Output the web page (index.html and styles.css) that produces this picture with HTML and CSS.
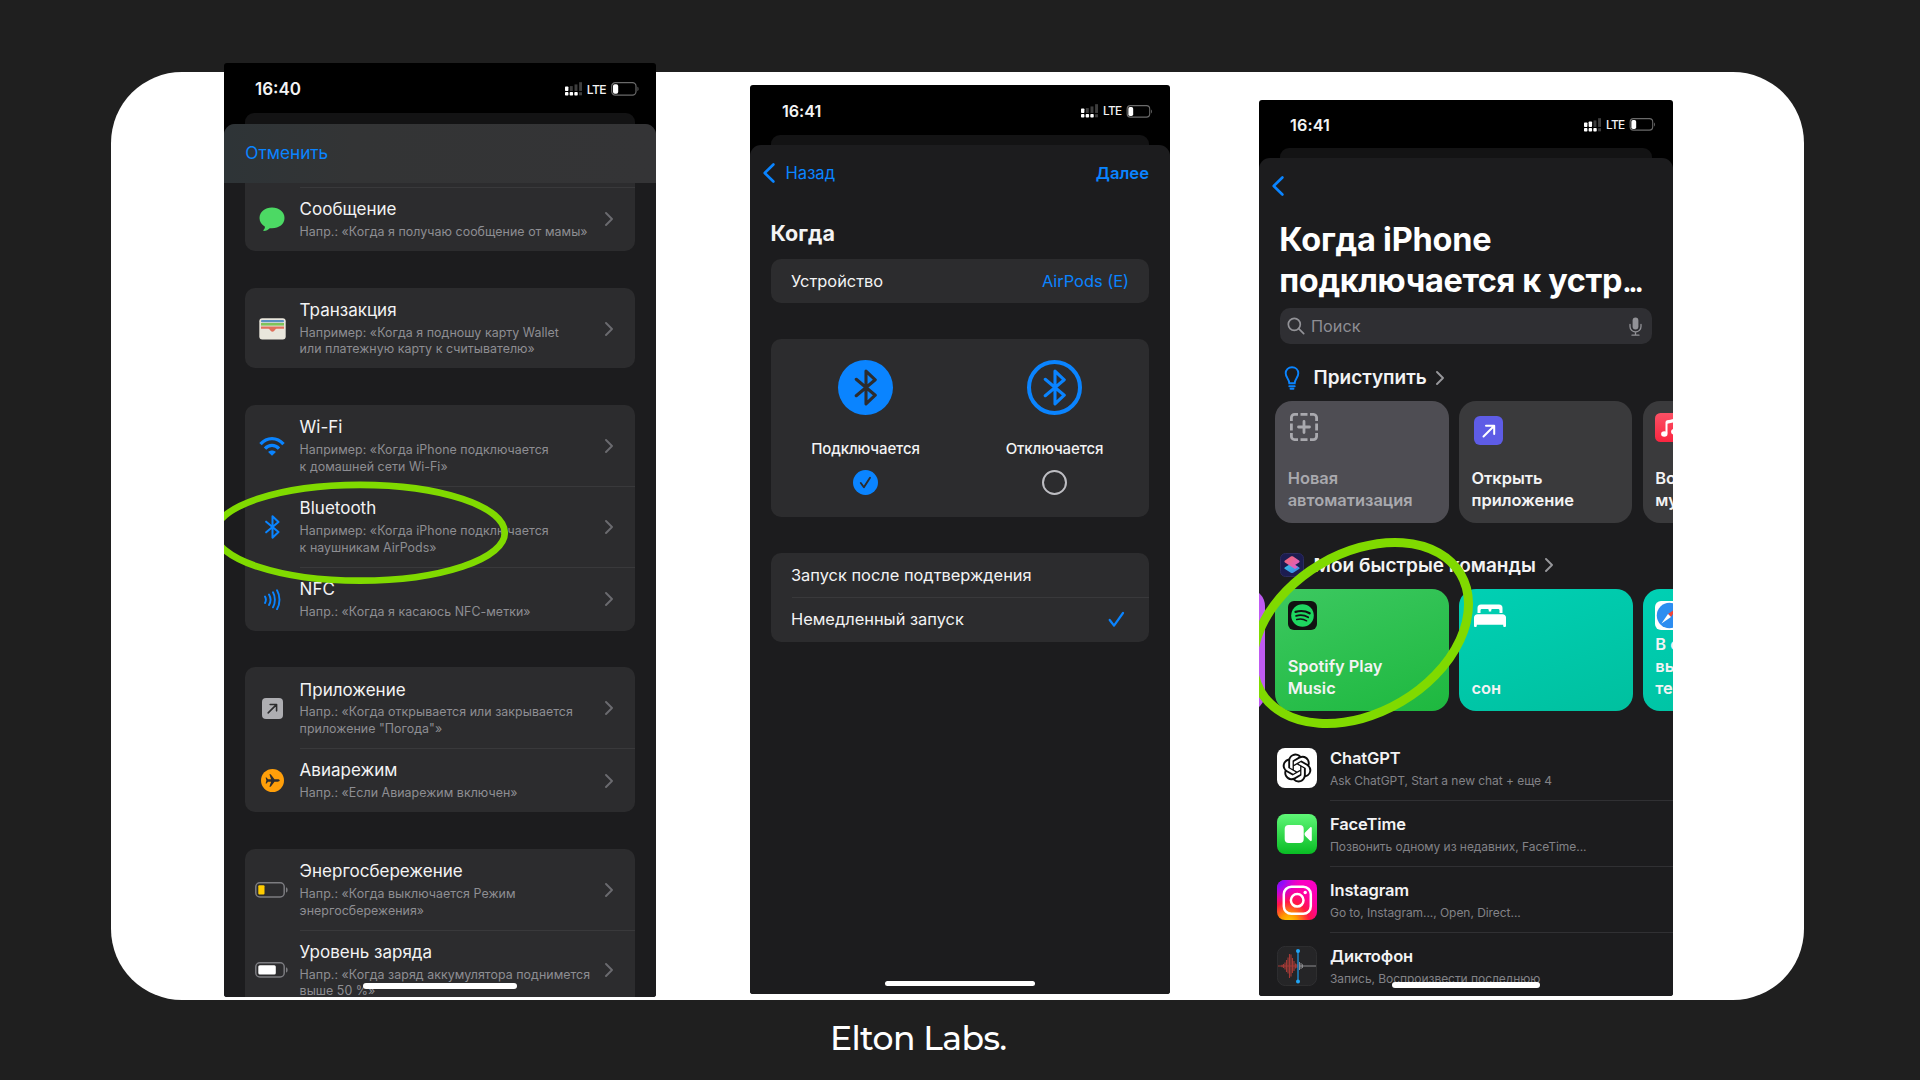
FILE: index.html
```html
<!DOCTYPE html>
<html lang="ru">
<head>
<meta charset="utf-8">
<title>Elton Labs.</title>
<link rel="stylesheet" href="styles.css">
</head>
<body>
<svg class="defs" width="0" height="0" aria-hidden="true">
  <defs>
    <symbol id="chev" viewBox="0 0 8 14"><path d="M1 1l6 6-6 6" fill="none" stroke="currentColor" stroke-width="1.9" stroke-linecap="round" stroke-linejoin="round"/></symbol>
    <symbol id="back" viewBox="0 0 12 20"><path d="M10.4 1.5L1.7 10l8.7 8.5" fill="none" stroke="currentColor" stroke-width="2.6" stroke-linecap="round" stroke-linejoin="round"/></symbol>
    <symbol id="bt" viewBox="0 0 22 36"><path d="M1.5 10L20 25.5 11 34V2l9 8.500L1.500 26" fill="none" stroke="currentColor" stroke-width="3" stroke-linecap="round" stroke-linejoin="round"/></symbol>
    <symbol id="battery" viewBox="0 0 28 14"><rect x=".7" y=".7" width="24.300" height="12.400" rx="3.600" fill="none" stroke="#6a6a6a" stroke-width="1.200"/><path d="M26.500 4.800c1.300.5 1.300 3.900 0 4.400z" fill="#6a6a6a"/><rect x="2" y="2.200" width="5.200" height="9.600" rx="1.800" fill="#fff"/></symbol>
    <symbol id="arrow" viewBox="0 0 14 14"><path d="M1.500 12.500L12 2M4 1.800h8.200V10" fill="none" stroke="currentColor" stroke-width="2" stroke-linecap="round" stroke-linejoin="round"/></symbol>
  </defs>
</svg>

<main class="panel">

  <section class="phone phone-1">
    <div class="status">
      <span class="time">16:40</span>
      <svg class="signal" viewBox="0 0 18 14"><g fill="#3d3d3d"><rect x="5" y="4" width="3" height="5"/><rect x="9.800" y="2.300" width="3" height="6.700"/><rect x="14.500" y="0" width="3" height="9"/><rect x="14.500" y="10.300" width="3" height="3.200"/></g><g fill="#fff"><rect y="4.300" width="3.500" height="4.800" rx=".8"/><rect y="10.200" width="3.500" height="3.500" rx=".8"/><rect x="4.800" y="10.200" width="3.500" height="3.500" rx=".8"/><rect x="9.600" y="10.200" width="3.500" height="3.500" rx=".8"/></g></svg>
      <span class="lte">LTE</span>
      <svg class="bat"><use href="#battery"/></svg>
    </div>
    <div class="under"></div>
    <div class="sheet">
      <header class="cancel-bar">Отменить</header>
      <div class="group group-cut">
        <div class="row">
          <span class="ico"><svg width="26" height="25" viewBox="0 0 26 25"><path d="M13 .5C20 .5 25.500 5 25.500 11S20 21.300 13 21.300c-.8 0-1.500 0-2.200-.1-1.600 1.600-3.700 2.700-6 2.700-.5 0-.6-.5-.3-.9 1-1 1.500-2.100 1.500-3.300C2.700 17.800.5 14.700.5 11 .5 5 6 .5 13 .5z" fill="#4cd964"/></svg></span>
          <div class="txt"><h3>Сообщение</h3><p>Напр.: «Когда я получаю сообщение от мамы»</p></div>
          <svg class="chev"><use href="#chev"/></svg>
        </div>
      </div>
      <div class="group">
        <div class="row">
          <span class="ico"><svg width="27" height="22" viewBox="0 0 27 22"><rect x=".3" y=".3" width="26.400" height="21.200" rx="3" fill="#e9e6dc"/><rect x="2" y="2" width="23" height="2.200" rx="1" fill="#5a8fc0"/><rect x="2" y="5" width="23" height="2.600" fill="#7fc35a"/><path d="M2 8.500h23v2.300h-7.500c-1.500 0-1.800 3-4 3s-2.500-3-4-3H2z" fill="#e0705c"/></svg></span>
          <div class="txt"><h3>Транзакция</h3><p>Например: «Когда я подношу карту Wallet<br>или платежную карту к считывателю»</p></div>
          <svg class="chev"><use href="#chev"/></svg>
        </div>
      </div>
      <div class="group">
        <div class="row">
          <span class="ico"><svg width="26" height="19" viewBox="0 0 26 19" fill="none" stroke="#0a84ff"><path d="M1.500 7.200C8-.2 18-.2 24.500 7.200" stroke-width="3.300"/><path d="M6 11.600c4-4.200 10-4.200 14 0" stroke-width="3.300"/><path d="M13 18.800l-3.900-3.900c2-2 5.800-2 7.800 0z" fill="#0a84ff" stroke="none"/></svg></span>
          <div class="txt"><h3>Wi-Fi</h3><p>Например: «Когда iPhone подключается<br>к домашней сети Wi-Fi»</p></div>
          <svg class="chev"><use href="#chev"/></svg>
        </div>
        <div class="row">
          <span class="ico"><svg class="blue" width="15" height="24"><use href="#bt"/></svg></span>
          <div class="txt"><h3>Bluetooth</h3><p>Например: «Когда iPhone подключается<br>к наушникам AirPods»</p></div>
          <svg class="chev"><use href="#chev"/></svg>
        </div>
        <div class="row">
          <span class="ico"><svg width="17" height="21" viewBox="0 0 17 21" fill="none" stroke="#0a84ff" stroke-width="1.900" stroke-linecap="round"><path d="M1 7.500c1.100 2 1.100 4.500 0 6.500M5 5.500c1.800 3 1.800 7.500 0 10.500M9 3.300c2.500 4.300 2.500 10.600 0 15M13 1.200c3.300 5.500 3.300 13.500 0 19"/></svg></span>
          <div class="txt"><h3>NFC</h3><p>Напр.: «Когда я касаюсь NFC-метки»</p></div>
          <svg class="chev"><use href="#chev"/></svg>
        </div>
      </div>
      <div class="group">
        <div class="row">
          <span class="ico"><span class="app-sq"><svg width="11" height="11"><use href="#arrow"/></svg></span></span>
          <div class="txt"><h3>Приложение</h3><p>Напр.: «Когда открывается или закрывается<br>приложение "Погода"»</p></div>
          <svg class="chev"><use href="#chev"/></svg>
        </div>
        <div class="row">
          <span class="ico"><svg width="23" height="23" viewBox="0 0 23 23"><circle cx="11.500" cy="11.500" r="11.500" fill="#ff9f0a"/><path d="M18.700 11.500c0-.7-1-1.200-2-1.200h-3.200L9.700 5.300H8.400l1.700 5H7L5.600 8.600h-1l.8 2.900-.8 2.900h1L7 12.700h3.100l-1.700 5h1.300l3.800-5h3.200c1 0 2-.5 2-1.200z" fill="#2c2c2e"/></svg></span>
          <div class="txt"><h3>Авиарежим</h3><p>Напр.: «Если Авиарежим включен»</p></div>
          <svg class="chev"><use href="#chev"/></svg>
        </div>
      </div>
      <div class="group">
        <div class="row">
          <span class="ico"><svg width="34" height="16" viewBox="0 0 34 16"><rect x=".8" y=".8" width="28.400" height="14.200" rx="4" fill="none" stroke="#7c7c80" stroke-width="1.500"/><path d="M31 5.200c2.200.6 2.200 4.800 0 5.400z" fill="#7c7c80"/><rect x="3.300" y="3.300" width="6.200" height="9.200" rx="1" fill="#ffcc00"/></svg></span>
          <div class="txt"><h3>Энергосбережение</h3><p>Напр.: «Когда выключается Режим<br>энергосбережения»</p></div>
          <svg class="chev"><use href="#chev"/></svg>
        </div>
        <div class="row">
          <span class="ico"><svg width="34" height="16" viewBox="0 0 34 16"><rect x=".8" y=".8" width="28.400" height="14.200" rx="4" fill="none" stroke="#7c7c80" stroke-width="1.500"/><path d="M31 5.200c2.200.6 2.200 4.800 0 5.400z" fill="#7c7c80"/><rect x="3.300" y="3.300" width="17.500" height="9.200" rx="1.500" fill="#fff"/></svg></span>
          <div class="txt"><h3>Уровень заряда</h3><p>Напр.: «Когда заряд аккумулятора поднимется<br>выше 50 %»</p></div>
          <svg class="chev"><use href="#chev"/></svg>
        </div>
      </div>
    </div>
    <div class="home"></div>
    <svg class="mark" viewBox="0 0 432 934"><ellipse cx="136" cy="469.800" rx="144.800" ry="47.900" fill="none" stroke="#80da00" stroke-width="6.700"/></svg>
  </section>

  <section class="phone phone-2">
    <div class="status">
      <span class="time">16:41</span>
      <svg class="signal" viewBox="0 0 18 14"><g fill="#3d3d3d"><rect x="5" y="4" width="3" height="5"/><rect x="9.800" y="2.300" width="3" height="6.700"/><rect x="14.500" y="0" width="3" height="9"/><rect x="14.500" y="10.300" width="3" height="3.200"/></g><g fill="#fff"><rect y="4.300" width="3.500" height="4.800" rx=".8"/><rect y="10.200" width="3.500" height="3.500" rx=".8"/><rect x="4.800" y="10.200" width="3.500" height="3.500" rx=".8"/><rect x="9.600" y="10.200" width="3.500" height="3.500" rx=".8"/></g></svg>
      <span class="lte">LTE</span>
      <svg class="bat"><use href="#battery"/></svg>
    </div>
    <div class="under"></div>
    <div class="sheet">
      <header class="nav"><svg class="back"><use href="#back"/></svg><span>Назад</span><b>Далее</b></header>
      <h2>Когда</h2>
      <div class="card device"><span>Устройство</span><span class="blue">AirPods (E)</span></div>
      <div class="card choice">
        <div class="opt">
          <span class="disc disc-on"><svg width="24" height="37"><use href="#bt"/></svg></span>
          <span class="opt-name">Подключается</span>
          <span class="radio radio-on"><svg width="13" height="13" viewBox="0 0 13 13"><path d="M1.800 7l3.100 4.200L11 1.800" fill="none" stroke="#2c2c2e" stroke-width="1.900" stroke-linecap="round" stroke-linejoin="round"/></svg></span>
        </div>
        <div class="opt">
          <span class="disc disc-off"><svg width="24" height="37"><use href="#bt"/></svg></span>
          <span class="opt-name">Отключается</span>
          <span class="radio radio-off"></span>
        </div>
      </div>
      <div class="card runs">
        <div class="run"><span>Запуск после подтверждения</span></div>
        <div class="run"><span>Немедленный запуск</span><svg class="blue" width="17" height="17" viewBox="0 0 17 17"><path d="M1.700 9l4.300 5.700L15 2" fill="none" stroke="currentColor" stroke-width="2.200" stroke-linecap="round" stroke-linejoin="round"/></svg></div>
      </div>
    </div>
    <div class="home"></div>
  </section>

  <section class="phone phone-3">
    <div class="status">
      <span class="time">16:41</span>
      <svg class="signal" viewBox="0 0 18 14"><g fill="#3d3d3d"><rect x="9.800" y="2.300" width="3" height="6.700"/><rect x="14.500" y="0" width="3" height="9"/><rect x="14.500" y="10.300" width="3" height="3.200"/></g><g fill="#fff"><rect y="4.300" width="3.500" height="4.800" rx=".8"/><rect x="4.800" y="3.300" width="3.500" height="5.800" rx=".8"/><rect y="10.200" width="3.500" height="3.500" rx=".8"/><rect x="4.800" y="10.200" width="3.500" height="3.500" rx=".8"/><rect x="9.600" y="10.200" width="3.500" height="3.500" rx=".8"/></g></svg>
      <span class="lte">LTE</span>
      <svg class="bat"><use href="#battery"/></svg>
    </div>
    <div class="under"></div>
    <div class="sheet">
      <header class="nav"><svg class="back"><use href="#back"/></svg></header>
      <h1>Когда iPhone<br><span class="second">подключается к устр</span><span class="dots">...</span></h1>
      <div class="search">
        <svg width="18" height="18" viewBox="0 0 18 18" fill="none" stroke="#929297" stroke-width="1.700" stroke-linecap="round"><circle cx="7.300" cy="7.300" r="6"/><path d="M11.700 11.700l5 5"/></svg>
        <span>Поиск</span>
        <svg width="13" height="19" viewBox="0 0 13 19"><rect x="3.600" y=".5" width="5.800" height="12" rx="2.900" fill="#929297"/><path d="M1 7.500V9.500a5.500 5.500 0 0 0 11 0V7.500M6.500 15v2.800M3 18.200h7" fill="none" stroke="#929297" stroke-width="1.300" stroke-linecap="round"/></svg>
      </div>

      <div class="head">
        <svg width="24" height="24" viewBox="0 0 24 24" fill="none" stroke="#0a84ff" stroke-width="1.900" stroke-linecap="round"><path d="M9.300 17.300c0-4-3.600-5.500-3.600-10C5.700 3.600 8.500 1.200 12 1.200s6.300 2.400 6.300 6.100c0 4.500-3.600 6-3.600 10zM9.300 20.200h5.400M10.500 22.800h3"/></svg>
        <span>Приступить</span>
        <svg class="chev"><use href="#chev"/></svg>
      </div>
      <div class="tiles">
        <div class="tile tile-new">
          <svg width="28" height="28" viewBox="0 0 28 28" fill="none" stroke="#a9a9ae" stroke-width="2.800"><path d="M1.400 8V4.500a3.200 3.200 0 0 1 3.200-3.100H8M20 1.400h3.500a3.200 3.200 0 0 1 3.100 3.200V8M26.600 20v3.500a3.200 3.200 0 0 1-3.200 3.100H20M8 26.600H4.500a3.200 3.200 0 0 1-3.100-3.200V20M10.500 1.400h7M10.500 26.600h7M1.400 10.500v7M26.600 10.500v7"/><path d="M14 8.500v11M8.500 14h11" stroke-linecap="round"/></svg>
          <p>Новая<br>автоматизация</p>
        </div>
        <div class="tile tile-open">
          <span class="open-ico"><svg width="14" height="14"><use href="#arrow"/></svg></span>
          <p>Открыть<br>приложение</p>
        </div>
        <div class="tile tile-music">
          <svg width="29" height="29" viewBox="0 0 29 29"><defs><linearGradient id="mus" x2="0" y2="1"><stop stop-color="#fb5165"/><stop offset="1" stop-color="#fa2540"/></linearGradient></defs><rect width="29" height="29" rx="5.500" fill="url(#mus)"/><path d="M11.500 8.500l10-2v11.500M11.500 8.500v12" fill="none" stroke="#fff" stroke-width="2"/><path d="M11 8l11-2.300v3L11 11z" fill="#fff"/><ellipse cx="9.300" cy="21" rx="3.200" ry="2.800" fill="#fff"/><ellipse cx="19.200" cy="18.800" rx="3.200" ry="2.800" fill="#fff"/></svg>
          <p>Воспр.<br>музыку</p>
        </div>
      </div>

      <div class="head head-2">
        <svg width="24" height="24" viewBox="0 0 24 24"><defs><linearGradient id="sc1" x2="1" y2="1"><stop stop-color="#f46a6a"/><stop offset="1" stop-color="#d65bd8"/></linearGradient><linearGradient id="sc2" x2="1" y2="1"><stop stop-color="#35c9e8"/><stop offset="1" stop-color="#3f7fe0"/></linearGradient></defs><rect x=".5" y=".5" width="23" height="23" rx="5" fill="#1c1c50" stroke="#2b2b5c"/><path d="M12 10l7 4.200c.8.500.8 1.300 0 1.800l-5.800 3.700c-.8.500-1.600.5-2.400 0L5 16c-.8-.5-.8-1.300 0-1.800z" fill="url(#sc2)"/><path d="M10.800 3.600c.8-.5 1.600-.5 2.400 0L19 7.600c.8.500.8 1.300 0 1.800L15 12l3 2-3 2L5 9.600c-.8-.5-.8-1.500 0-2z" fill="url(#sc1)"/></svg>
        <span>Мои быстрые команды</span>
        <svg class="chev"><use href="#chev"/></svg>
      </div>
      <div class="tiles tiles-2">
        <div class="tile tile-prev"></div>
        <div class="tile tile-spot">
          <svg width="29" height="29" viewBox="0 0 29 29"><rect width="29" height="29" rx="6" fill="#111"/><circle cx="14.500" cy="14.500" r="11.300" fill="#1ed760"/><g fill="none" stroke="#111" stroke-linecap="round"><path d="M7.500 10.900c4.600-1.400 10-1 14.200 1.400" stroke-width="2.200"/><path d="M8.100 14.900c4-1.200 8.500-.7 12.100 1.300" stroke-width="1.800"/><path d="M8.700 18.600c3.400-.9 6.900-.5 9.900 1.200" stroke-width="1.500"/></g></svg>
          <p>Spotify Play<br>Music</p>
        </div>
        <div class="tile tile-sleep">
          <svg width="32" height="24" viewBox="0 0 32 24" fill="#fff"><path d="M3.500 9V4A3.500 3.500 0 0 1 7 .5h18A3.500 3.500 0 0 1 28.500 4v5h-3V6.500c0-1-.5-1.500-1.500-1.500h-5.500c-1 0-1.300.6-1.300 1.500v1h-2.400v-1C14.800 5.600 14.500 5 13.500 5H8c-1 0-1.500.5-1.500 1.500V9z"/><path d="M3.500 10.300h25c2 0 3.500 1.300 3.500 3.200V22c0 1.300-2.800 1.300-2.800 0v-1.200H2.800V22c0 1.300-2.800 1.300-2.800 0v-8.500c0-1.900 1.500-3.200 3.500-3.200z"/></svg>
          <p>сон</p>
        </div>
        <div class="tile tile-safari">
          <svg width="29" height="29" viewBox="0 0 29 29"><rect width="29" height="29" rx="6" fill="#fff"/><circle cx="14.500" cy="14.500" r="12.700" fill="#2d8df0"/><path d="M22.500 6.500l-6.500 9.500-3-3z" fill="#f04438"/><path d="M6.500 22.500l6.500-9.500 3 3z" fill="#fff"/></svg>
          <p>В ответ<br>вызов<br>тест</p>
        </div>
      </div>

      <ul class="apps">
        <li>
          <svg class="app" viewBox="0 0 40 40"><rect width="40" height="40" rx="8" fill="#fff"/><path transform="translate(5.600 5.600) scale(1.200)" fill="#0d0d0d" d="M22.282 9.821a5.985 5.985 0 0 0-.516-4.910 6.046 6.046 0 0 0-6.510-2.900A6.065 6.065 0 0 0 4.981 4.180a5.985 5.985 0 0 0-3.998 2.900 6.046 6.046 0 0 0 .743 7.097 5.980 5.980 0 0 0 .511 4.911 6.051 6.051 0 0 0 6.515 2.900A5.985 5.985 0 0 0 13.260 24a6.056 6.056 0 0 0 5.772-4.206 5.990 5.990 0 0 0 3.997-2.900 6.056 6.056 0 0 0-.747-7.073zM13.260 22.430a4.476 4.476 0 0 1-2.876-1.040l.141-.081 4.779-2.758a.795.795 0 0 0 .392-.681v-6.737l2.020 1.168a.071.071 0 0 1 .038.052v5.583a4.504 4.504 0 0 1-4.494 4.494zM3.600 18.304a4.470 4.470 0 0 1-.535-3.014l.142.085 4.783 2.759a.771.771 0 0 0 .780 0l5.843-3.369v2.332a.080.080 0 0 1-.033.062L9.740 19.950a4.500 4.500 0 0 1-6.140-1.646zM2.340 7.896a4.485 4.485 0 0 1 2.366-1.973V11.600a.766.766 0 0 0 .388.676l5.815 3.355-2.020 1.168a.076.076 0 0 1-.071 0l-4.830-2.786A4.504 4.504 0 0 1 2.340 7.872zm16.597 3.855l-5.833-3.387L15.119 7.200a.076.076 0 0 1 .071 0l4.830 2.791a4.494 4.494 0 0 1-.676 8.105v-5.678a.790.790 0 0 0-.407-.667zm2.010-3.023l-.141-.085-4.774-2.782a.776.776 0 0 0-.785 0L9.409 9.230V6.897a.066.066 0 0 1 .028-.061l4.830-2.787a4.500 4.500 0 0 1 6.680 4.660zm-12.640 4.135l-2.020-1.164a.080.080 0 0 1-.038-.057V6.075a4.500 4.500 0 0 1 7.375-3.453l-.142.080L8.704 5.460a.795.795 0 0 0-.393.681zm1.097-2.365l2.602-1.500 2.607 1.500v2.999l-2.597 1.500-2.607-1.500z"/></svg>
          <div><h4>ChatGPT</h4><p>Ask ChatGPT, Start a new chat + еще 4</p></div>
        </li>
        <li>
          <svg class="app" viewBox="0 0 40 40"><defs><linearGradient id="ft" x2="0" y2="1"><stop stop-color="#5ff777"/><stop offset="1" stop-color="#09bc24"/></linearGradient></defs><rect width="40" height="40" rx="8" fill="url(#ft)"/><rect x="7.700" y="11" width="19" height="18" rx="4" fill="#fff"/><path d="M28.300 18.300l4.800-4.800c.8-.8 1.700-.4 1.700.6v12c0 1-.9 1.400-1.700.6l-4.800-4.800c-1-1-1-2.600 0-3.600z" fill="#fff"/></svg>
          <div><h4>FaceTime</h4><p>Позвонить одному из недавних, FaceTime...</p></div>
        </li>
        <li>
          <svg class="app" viewBox="0 0 40 40"><defs><radialGradient id="ig1" cx=".3" cy="1.050" r="1.050"><stop stop-color="#ffd000"/><stop offset=".2" stop-color="#ff9a00"/><stop offset=".48" stop-color="#ff1646"/><stop offset=".75" stop-color="#ff00a0"/><stop offset="1" stop-color="#fb00c4"/></radialGradient><radialGradient id="ig2" cx="0" cy="0" r=".6"><stop stop-color="#6a10ff"/><stop offset=".3" stop-color="#8a0cff" stop-opacity=".9"/><stop offset="1" stop-color="#d000e0" stop-opacity="0"/></radialGradient></defs><rect width="40" height="40" rx="8" fill="url(#ig1)"/><rect width="40" height="40" rx="8" fill="url(#ig2)"/><g fill="none" stroke="#fff" stroke-width="2.500"><rect x="6.800" y="6.800" width="27" height="27" rx="7.500"/><circle cx="20.200" cy="20.300" r="6.300"/></g><circle cx="28.200" cy="12.500" r="1.700" fill="#fff"/></svg>
          <div><h4>Instagram</h4><p>Go to, Instagram..., Open, Direct...</p></div>
        </li>
        <li>
          <svg class="app" viewBox="0 0 40 40"><rect x=".4" y=".4" width="39.200" height="39.200" rx="8" fill="#252527" stroke="#333336" stroke-width=".8"/><path d="M1 20h20" stroke="#a33a36" stroke-width="1"/><path d="M5 18.800v2.400M6.500 18v4M8 16.500v7M9.500 14v12M11 11.500v16M12.500 8v24M14 8.500v22M15.500 12v15M17 15v10M18.500 17.500v5M20 18v4" stroke="#a33a36" stroke-width="1.100"/><path d="M22 20h17" stroke="#8d8d90" stroke-width="1"/><path d="M22.500 16v8M24 17v6M25.500 18.300v3.600" stroke="#8d8d90" stroke-width="1"/><path d="M21 5v30" stroke="#1b93e0" stroke-width="1.300"/><circle cx="21" cy="5" r="2" fill="#20a5f5"/><circle cx="21" cy="35.500" r="2" fill="#20a5f5"/></svg>
          <div><h4>Диктофон</h4><p>Запись, Воспроизвести последнюю</p></div>
        </li>
      </ul>
    </div>
    <div class="home"></div>
    <svg class="mark" viewBox="0 0 414 896"><ellipse cx="101.800" cy="533" rx="115.900" ry="79.800" transform="rotate(-30.600 101.800 533)" fill="none" stroke="#80da00" stroke-width="9"/></svg>
  </section>
</main>

<footer class="brand">Elton Labs.</footer>
</body>
</html>
```
FILE: styles.css
```css
* { box-sizing: border-box; margin: 0; padding: 0; }
body {
  width: 1920px;
  height: 1080px;
  overflow: hidden;
  background: #1f1f1f;
  color: #f3f3f4;
  font-family: Inter, "Noto Sans", sans-serif;
  display: flex;
  flex-direction: column;
}
.defs { display: none; }
.blue { color: #0a84ff; }
h1, h2, h3, h4 { font-weight: 400; }
svg { display: block; flex: none; }

.panel {
  flex: none;
  width: 1693px;
  height: 928.600px;
  margin: 71.600px 0 0 111px;
  padding-left: 113px;
  background: #fff;
  border-radius: 71px;
  display: flex;
  align-items: flex-start;
}
.phone {
  position: relative;
  flex: none;
  overflow: hidden;
  background: #000;
  border-radius: 3px;
  display: flex;
  flex-direction: column;
}
.phone-1 { width: 432px; height: 934px; margin-top: -8.600px; }
.phone-2 { width: 420px; height: 909px; margin: 13.600px 0 0 94px; }
.phone-3 { width: 414px; height: 896px; margin: 28.400px 0 0 89px; }

.status { flex: none; display: flex; align-items: center; }
.phone-1 .status { height: 50px; padding: 2px 17.500px 0 31px; }
.phone-2 .status { height: 50px; padding: 2px 17.500px 0 32px; }
.phone-3 .status { height: 48px; padding: 2px 17.500px 0 31px; }
.time { flex: 1; font-size: 17px; font-weight: 600; }
.phone-2 .time, .phone-3 .time { font-size: 16.200px; letter-spacing: -.050px; }
.phone-3 .time { letter-spacing: .1px; }
.signal { width: 17.500px; height: 14px; }
.lte { margin: 0 4.500px 0 4.500px; font-size: 12.200px; font-weight: 500; letter-spacing: -.6px; }
.phone-2 .lte, .phone-3 .lte { margin: 0 4px 0 4px; font-size: 11.800px; }
.bat { width: 28px; height: 14px; }
.phone-2 .bat, .phone-3 .bat { width: 27px; height: 13px; }

.under { flex: none; height: 10.500px; margin: 0 21px; background: #131314; border-radius: 9px 9px 0 0; }
.phone-2 .under, .phone-3 .under { height: 10px; }
.sheet { flex: 1; min-height: 0; background: #1c1c1e; border-radius: 11px 11px 0 0; overflow: hidden; }

.home { position: absolute; bottom: 8.500px; left: 50%; width: 154px; height: 5.500px; margin-left: -77px; border-radius: 3px; background: #fff; }
.phone-2 .home { bottom: 8px; width: 150px; margin-left: -75px; }
.phone-3 .home { bottom: 8px; width: 148px; margin-left: -74px; }
.mark { position: absolute; left: 0; top: 0; width: 100%; height: 100%; }

/* triggers list */
.cancel-bar {
  height: 59px;
  padding: 17.500px 21.300px;
  background: linear-gradient(90deg, #2e3437, #333435 30%, #343436);
  color: #0a84ff;
  font-size: 17.200px;
  line-height: 24px;
}
.group { margin: 0 21.300px 36.800px; background: #2c2c2e; border-radius: 10px; overflow: hidden; }
.group-cut { border-radius: 0 0 10px 10px; padding-top: 4.500px; }
.row { position: relative; display: flex; align-items: center; padding: 11.200px 22px 10.300px 0; }
.row + .row::before, .group-cut .row::before { content: ""; position: absolute; top: 0; left: 54.500px; right: 0; height: 1px; background: #39393b; }
.ico { flex: none; width: 54.300px; display: flex; justify-content: center; }
.txt { flex: 1; white-space: nowrap; }
.row h3 { font-size: 17px; line-height: 22px; }
.row p { margin-top: 3.800px; font-size: 12.400px; line-height: 16.700px; letter-spacing: .050px; color: #8e8e93; }
.chev { width: 8px; height: 14px; color: #6b6b6f; }
.app-sq { width: 21px; height: 21px; border-radius: 4px; background: #aeaeb2; color: #2c2c2e; display: grid; place-items: center; }

/* condition screen */
.nav { display: flex; align-items: center; color: #0a84ff; }
.back { width: 12px; height: 20px; }
.phone-2 .nav { height: 55px; padding: 0 21px 0 13px; font-size: 16.600px; }
.phone-2 .nav span { margin-left: 10.500px; }
.phone-2 .nav b { margin-left: auto; font-weight: 600; }
.phone-2 h2 { margin: 20px 20.500px 0; font-size: 21.500px; line-height: 26px; font-weight: 700; }
.card { margin: 0 21px; background: #2c2c2e; border-radius: 10px; font-size: 16.400px; }
.device { margin-top: 13px; height: 44px; padding: 0 20px; display: flex; align-items: center; justify-content: space-between; }
.choice { margin-top: 36px; height: 178px; display: flex; }
.opt { flex: 1; display: flex; flex-direction: column; align-items: center; padding-top: 20.800px; }
.disc { width: 55px; height: 55px; border-radius: 50%; display: grid; place-items: center; }
.disc-on { background: #0a84ff; color: #2c2c2e; }
.disc-off { border: 4.500px solid #0a84ff; color: #0a84ff; }
.opt-name { margin-top: 22.700px; font-size: 15px; line-height: 22px; font-weight: 500; letter-spacing: -.120px; }
.radio { width: 25px; height: 25px; margin-top: 10.500px; border-radius: 50%; display: grid; place-items: center; }
.radio-on { background: #0a84ff; }
.radio-off { border: 2px solid #bdbdc2; }
.runs { margin-top: 35.500px; }
.run { position: relative; height: 44.500px; padding: 0 24px 0 20px; display: flex; align-items: center; justify-content: space-between; }
.run + .run::before { content: ""; position: absolute; top: 0; left: 20.500px; right: 0; height: 1px; background: #39393b; }

/* action picker */
.phone-3 .nav { height: 56px; padding: 0 13px; }
h1 { margin: 4.700px 20.300px 0; font-size: 32.500px; line-height: 41px; font-weight: 700; letter-spacing: -.200px; white-space: nowrap; color: #fff; }
.second { letter-spacing: -.370px; }
.dots { letter-spacing: -3.200px; font-size: 28px; line-height: 1; }
.search { margin: 7.400px 21px 0; height: 36px; padding: 0 10px 0 7px; display: flex; align-items: center; border-radius: 10px; background: #2f2f33; color: #8e8e94; font-size: 16.300px; }
.search span { flex: 1; margin-left: 6px; }
.head { height: 57px; padding: 10px 21px 0; display: flex; align-items: center; font-size: 19px; font-weight: 600; }
.head span { margin: 0 9px 0 9.500px; white-space: nowrap; }
.head .chev { color: #97979b; }
.tiles { display: flex; gap: 10.500px; margin-left: 16.400px; }
.tiles-2 { margin-left: -167.400px; }
.tile { flex: none; width: 173.300px; height: 122px; padding: 12px 12.300px; border-radius: 17px; display: flex; flex-direction: column; justify-content: space-between; align-items: flex-start; font-size: 16.400px; line-height: 22px; font-weight: 600; letter-spacing: 0; white-space: nowrap; }
.tile-new { background: #4e4d53; color: #a9a9ae; }
.tile-new svg { margin-left: 2.500px; }
.tile-open, .tile-music { background: #3a3a3c; }
.open-ico { width: 29px; height: 29px; margin: 3px 0 0 3px; border-radius: 6px; background: #5e5ce6; color: #fff; display: grid; place-items: center; }
.head-2 { height: 66px; padding-top: 18px; }
.tile-prev { background: #bf5af2; }
.tile-spot { background: linear-gradient(160deg, #3cc860, #1eb83f); }
.tile-sleep, .tile-safari { background: linear-gradient(160deg, #00d0b4, #00c09f); }
.tile-sleep svg { margin: 3px 0 0 2px; }
.apps { list-style: none; margin-top: 24px; }
.apps li { position: relative; height: 66px; padding-left: 17.800px; display: flex; align-items: center; gap: 13.200px; }
.apps li + li::before { content: ""; position: absolute; top: -1px; left: 70.500px; right: 0; height: 1px; background: #303033; }
.app { width: 40px; height: 40px; }
.apps h4 { font-size: 16.500px; line-height: 20px; font-weight: 600; letter-spacing: -.120px; }
.apps p { margin-top: 5.500px; margin-bottom: -.5px; font-size: 12px; line-height: 16px; letter-spacing: -.050px; color: #828287; white-space: nowrap; }

.brand { margin: 17px 0 0 830px; font-family: Montserrat, Inter, sans-serif; font-size: 33px; line-height: 42px; font-weight: 500; letter-spacing: -.550px; color: #fff; }
```
